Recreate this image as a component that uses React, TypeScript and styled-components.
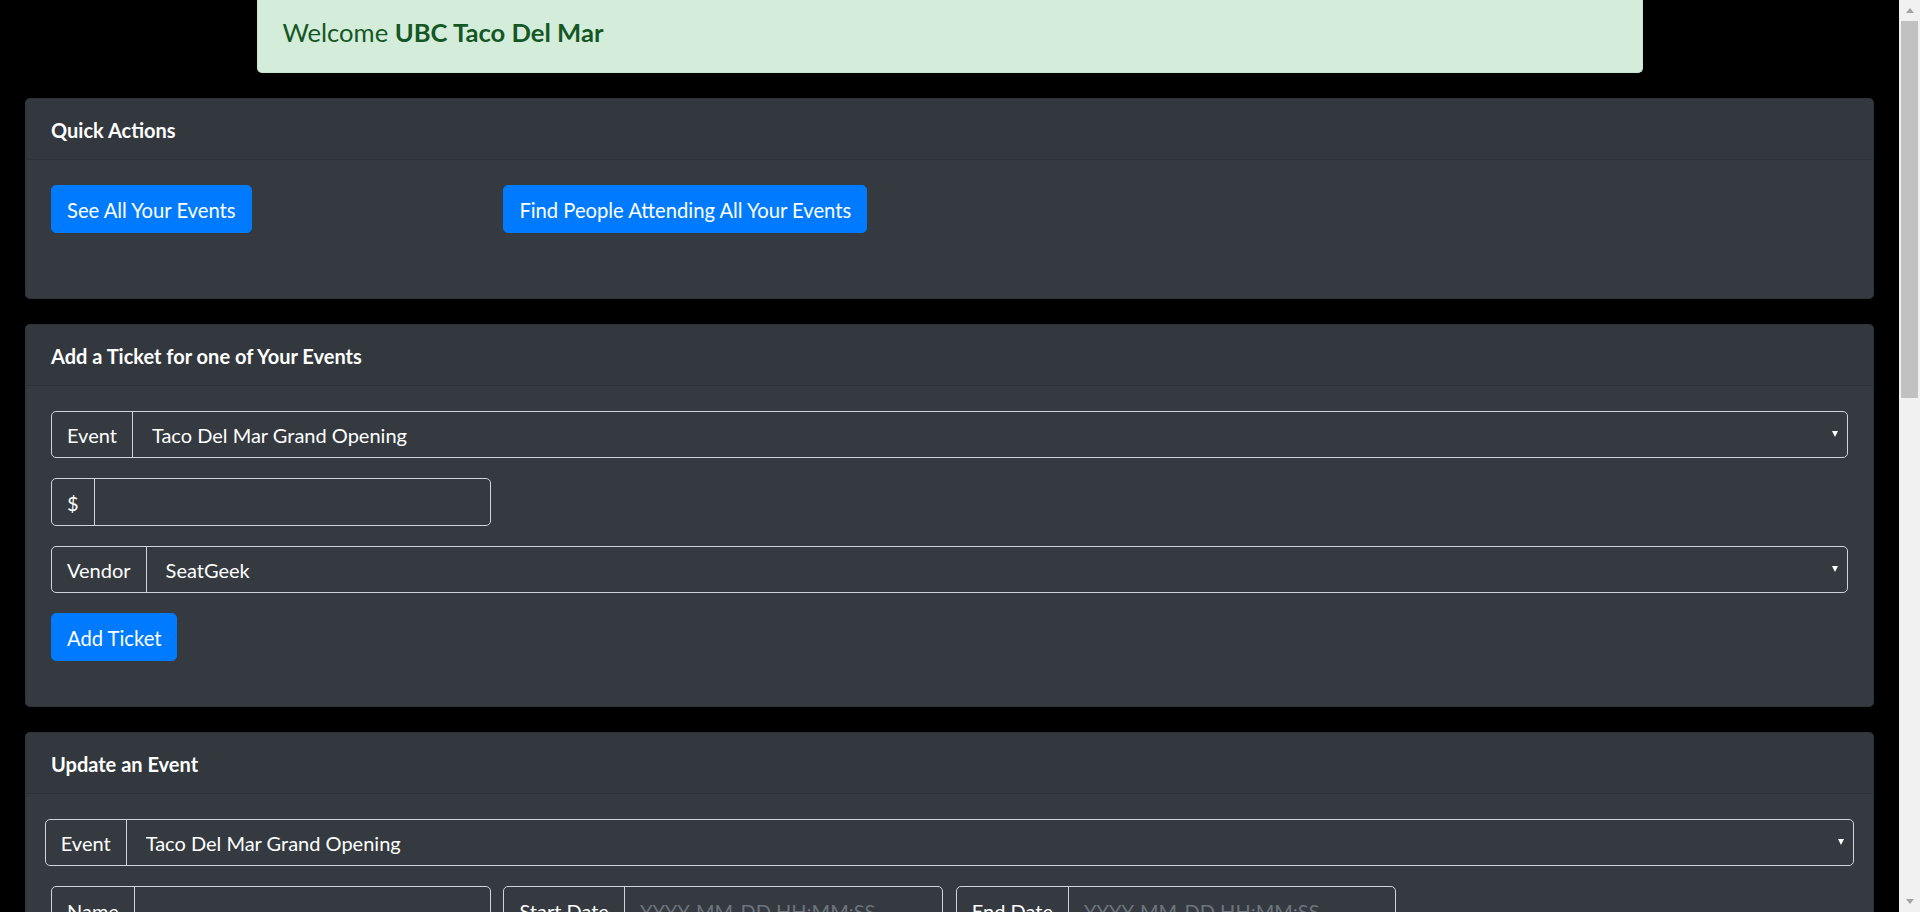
import React from 'react'
import styled, { createGlobalStyle } from 'styled-components'

const GlobalStyle = createGlobalStyle`
  html, body {
    margin: 0;
    padding: 0;
    background-color: #000000;
    overflow: hidden;
  }
  body {
    font-family: 'Lato', 'Liberation Sans', sans-serif;
    color: #ffffff;
  }
  * {
    box-sizing: border-box;
  }
`

const Screen = styled.div`
  display: flex;
  flex-direction: row;
  width: 100%;
  height: 100vh;
  overflow: hidden;
`

const Main = styled.div`
  flex: 1;
  min-width: 0;
  overflow: hidden;
`

const Alert = styled.div`
  width: 1386px;
  margin: 0 auto 25px;
  padding: 15px 25px;
  background-color: #d4edda;
  border: 1px solid #c3e6cb;
  border-top: none;
  border-radius: 0 0 5px 5px;
  color: #155724;
`

const AlertTitle = styled.h5`
  margin: 2px 0 10px;
  font-size: 25.6px;
  font-weight: 400;
  line-height: 30px;

  b {
    font-weight: 700;
  }
`

const Card = styled.section`
  margin: 25px;
  background-color: #343a40;
  border: 1px solid rgba(0, 0, 0, 0.125);
  border-radius: 5px;
`

const CardHeader = styled.div`
  padding: 16px 25px 14px;
  background-color: rgba(0, 0, 0, 0.03);
  border-bottom: 1px solid rgba(0, 0, 0, 0.125);
  font-size: 20px;
  font-weight: 700;
  line-height: 30px;
`

const CardBody = styled.div`
  padding: 25px;
`

const FormRow = styled.div<{ gap?: number }>`
  display: grid;
  grid-template-columns: repeat(4, 1fr);
  column-gap: 12.5px;
  margin-bottom: ${p => p.gap ?? 20}px;
`

const Button = styled.button<{ gap?: number }>`
  justify-self: start;
  display: inline-block;
  margin-bottom: ${p => p.gap ?? 0}px;
  padding: 8px 15px 5.5px;
  height: 47.5px;
  font-family: inherit;
  font-size: 20.2px;
  line-height: 30px;
  color: #ffffff;
  background-color: #007bff;
  border: 1px solid #007bff;
  border-radius: 5px;
  cursor: pointer;
`

const InputGroup = styled.div<{ bleed?: boolean }>`
  display: flex;
  align-items: stretch;
  height: 47.5px;
  margin: ${p => (p.bleed ? '0 -6.25px 20px' : '0 0 20px')};
  border: 1px solid #ced4da;
  border-radius: 5px;
  font-size: 20px;
  line-height: 30px;
`

const Prepend = styled.span`
  display: flex;
  align-items: center;
  padding: 2px 15px 0;
  border-right: 1px solid #ced4da;
  color: #ffffff;
  white-space: nowrap;
`

const TextInput = styled.input`
  flex: 1;
  min-width: 0;
  padding: 2px 15px 0;
  background: transparent;
  border: none;
  outline: none;
  font-family: inherit;
  font-size: 20px;
  color: #ffffff;

  &::placeholder {
    color: #6c757d;
  }
`

const SelectWrap = styled.div`
  position: relative;
  flex: 1;
  display: flex;
`

const Select = styled.select`
  flex: 1;
  appearance: none;
  padding: 2px 30px 0 19px;
  background: transparent;
  border: none;
  outline: none;
  font-family: inherit;
  font-size: 20px;
  color: #ffffff;

  option {
    color: #000000;
  }
`

const Caret = styled.span`
  position: absolute;
  right: 9px;
  top: 50%;
  margin-top: -3px;
  width: 0;
  height: 0;
  border-left: 3.5px solid transparent;
  border-right: 3.5px solid transparent;
  border-top: 6px solid #ffffff;
  pointer-events: none;
`

const Scrollbar = styled.div`
  display: flex;
  flex-direction: column;
  width: 21px;
  height: 100%;
  background-color: #f1f1f1;
`

const ScrollArrow = styled.div<{ down?: boolean }>`
  display: flex;
  align-items: center;
  justify-content: center;
  height: 21px;

  &::after {
    content: '';
    width: 0;
    height: 0;
    border-left: 4.5px solid transparent;
    border-right: 4.5px solid transparent;
    ${p => (p.down ? 'border-top' : 'border-bottom')}: 5px solid #a3a3a3;
  }
`

const Thumb = styled.div`
  height: 377px;
  margin: 0 2px 0 2px;
  background-color: #c1c1c1;
`

const Spacer = styled.div`
  flex: 1;
`

function EventSelect({ label, value, bleed }: { label: string; value: string; bleed?: boolean }) {
  return (
    <InputGroup bleed={bleed}>
      <Prepend>{label}</Prepend>
      <SelectWrap>
        <Select defaultValue={value}>
          <option>{value}</option>
        </Select>
        <Caret />
      </SelectWrap>
    </InputGroup>
  )
}

export default function App() {
  return (
    <>
      <GlobalStyle />
      <Screen>
        <Main>
          <Alert>
            <AlertTitle>
              Welcome <b>UBC Taco Del Mar</b>
            </AlertTitle>
          </Alert>

          <Card>
            <CardHeader>Quick Actions</CardHeader>
            <CardBody>
              <FormRow gap={40}>
                <Button>See All Your Events</Button>
                <Button>Find People Attending All Your Events</Button>
              </FormRow>
            </CardBody>
          </Card>

          <Card>
            <CardHeader>Add a Ticket for one of Your Events</CardHeader>
            <CardBody>
              <EventSelect label="Event" value="Taco Del Mar Grand Opening" />
              <FormRow gap={0}>
                <InputGroup>
                  <Prepend>$</Prepend>
                  <TextInput type="text" />
                </InputGroup>
              </FormRow>
              <EventSelect label="Vendor" value="SeatGeek" />
              <Button gap={20}>Add Ticket</Button>
            </CardBody>
          </Card>

          <Card>
            <CardHeader>Update an Event</CardHeader>
            <CardBody>
              <EventSelect label="Event" value="Taco Del Mar Grand Opening" bleed />
              <FormRow gap={0}>
                <InputGroup>
                  <Prepend>Name</Prepend>
                  <TextInput type="text" />
                </InputGroup>
                <InputGroup>
                  <Prepend>Start Date</Prepend>
                  <TextInput type="text" placeholder="YYYY-MM-DD HH:MM:SS" />
                </InputGroup>
                <InputGroup>
                  <Prepend>End Date</Prepend>
                  <TextInput type="text" placeholder="YYYY-MM-DD HH:MM:SS" />
                </InputGroup>
              </FormRow>
            </CardBody>
          </Card>
        </Main>
        <Scrollbar>
          <ScrollArrow />
          <Thumb />
          <Spacer />
          <ScrollArrow down />
        </Scrollbar>
      </Screen>
    </>
  )
}
